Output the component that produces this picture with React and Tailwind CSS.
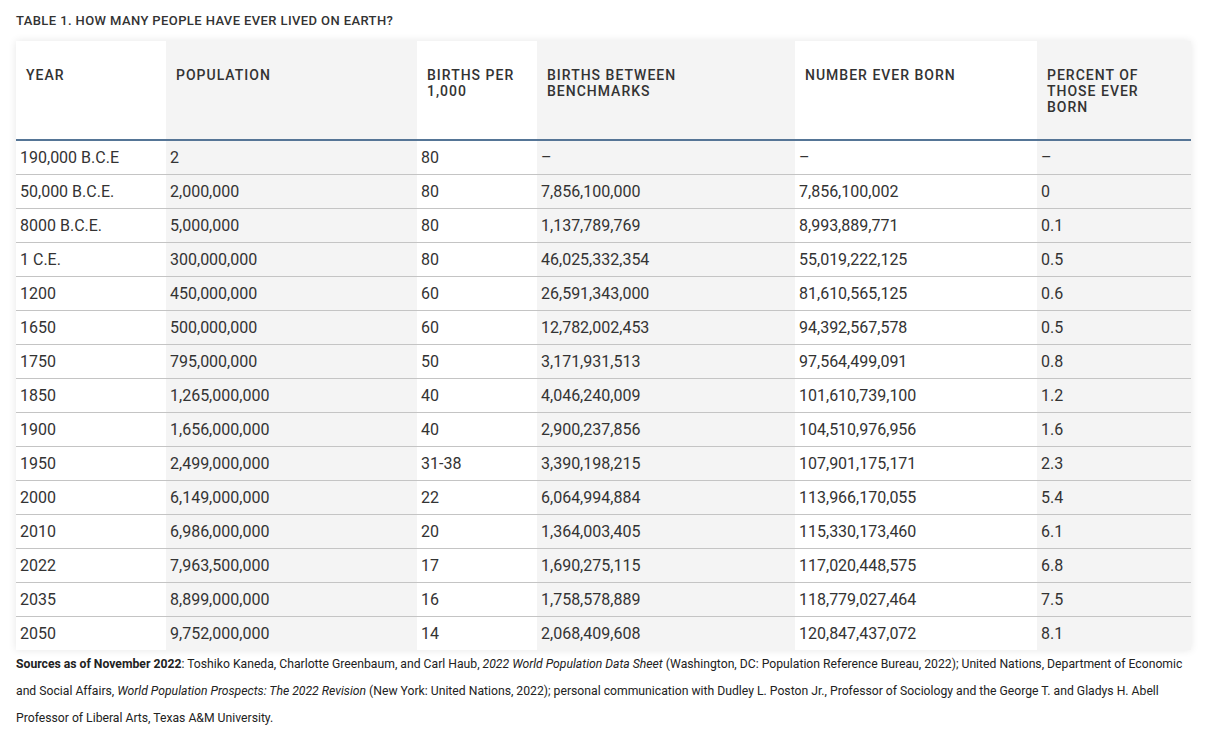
import React from "react";

const rows = [
  ["190,000 B.C.E", "2", "80", "–", "–", "–"],
  ["50,000 B.C.E.", "2,000,000", "80", "7,856,100,000", "7,856,100,002", "0"],
  ["8000 B.C.E.", "5,000,000", "80", "1,137,789,769", "8,993,889,771", "0.1"],
  ["1 C.E.", "300,000,000", "80", "46,025,332,354", "55,019,222,125", "0.5"],
  ["1200", "450,000,000", "60", "26,591,343,000", "81,610,565,125", "0.6"],
  ["1650", "500,000,000", "60", "12,782,002,453", "94,392,567,578", "0.5"],
  ["1750", "795,000,000", "50", "3,171,931,513", "97,564,499,091", "0.8"],
  ["1850", "1,265,000,000", "40", "4,046,240,009", "101,610,739,100", "1.2"],
  ["1900", "1,656,000,000", "40", "2,900,237,856", "104,510,976,956", "1.6"],
  ["1950", "2,499,000,000", "31-38", "3,390,198,215", "107,901,175,171", "2.3"],
  ["2000", "6,149,000,000", "22", "6,064,994,884", "113,966,170,055", "5.4"],
  ["2010", "6,986,000,000", "20", "1,364,003,405", "115,330,173,460", "6.1"],
  ["2022", "7,963,500,000", "17", "1,690,275,115", "117,020,448,575", "6.8"],
  ["2035", "8,899,000,000", "16", "1,758,578,889", "118,779,027,464", "7.5"],
  ["2050", "9,752,000,000", "14", "2,068,409,608", "120,847,437,072", "8.1"],
];

const widths = ["w-[150px]", "w-[251px]", "w-[120px]", "w-[258px]", "w-[242px]", "w-[154px]"];
const bgs = ["bg-white", "bg-[#f4f4f4]", "bg-white", "bg-[#f4f4f4]", "bg-white", "bg-[#f4f4f4]"];

const headers = [
  ["YEAR"],
  ["POPULATION"],
  ["BIRTHS PER", "1,000"],
  ["BIRTHS BETWEEN", "BENCHMARKS"],
  ["NUMBER EVER BORN"],
  ["PERCENT OF", "THOSE EVER", "BORN"],
];

export default function App() {
  return (
    <div className="w-[1222px] h-[746px] bg-white text-[#333] overflow-hidden" style={{ fontFamily: "Roboto, 'Liberation Sans', sans-serif" }}>
      <div className="pl-[16px] pt-[13px] text-[13px] leading-[16px] font-medium tracking-[0.4px] text-[#333]">
        TABLE 1. HOW MANY PEOPLE HAVE EVER LIVED ON EARTH?
      </div>
      <div className="ml-[16px] mt-[12px] w-[1175px] shadow-[0_0_8px_rgba(0,0,0,0.10)]">
        <table className="w-[1175px] border-collapse table-fixed">
          <thead>
            <tr className="border-b-[2px] border-[#557596]">
              {headers.map((h, i) => (
                <th
                  key={i}
                  className={`${widths[i]} ${bgs[i]} h-[99px] align-top text-left pt-[26px] pl-[10px] pr-[4px] text-[14px] leading-[16px] font-medium tracking-[1px] text-[#333]`}
                >
                  {h.map((line, j) => (
                    <div key={j} className="whitespace-nowrap">{line}</div>
                  ))}
                </th>
              ))}
            </tr>
          </thead>
          <tbody>
            {rows.map((r, ri) => (
              <tr key={ri} className={ri < rows.length - 1 ? "border-b border-[#c4c4c4]" : ""}>
                {r.map((c, ci) => (
                  <td
                    key={ci}
                    className={`${bgs[ci]} h-[34px] pl-[4px] pt-[2px] text-[16px] leading-[20px] text-[#333] whitespace-nowrap align-middle`}
                  >
                    {c}
                  </td>
                ))}
              </tr>
            ))}
          </tbody>
        </table>
      </div>
      <div className="pl-[16px] pt-[1px] text-[12.2px] leading-[27px] text-[#222]">
        <div className="whitespace-nowrap">
          <span className="font-bold">Sources as of November 2022</span>: Toshiko Kaneda, Charlotte Greenbaum, and Carl Haub, <i>2022 World Population Data Sheet</i> (Washington, DC: Population Reference Bureau, 2022); United Nations, Department of Economic
        </div>
        <div className="whitespace-nowrap">
          and Social Affairs, <i>World Population Prospects: The 2022 Revision</i> (New York: United Nations, 2022); personal communication with Dudley L. Poston Jr., Professor of Sociology and the George T. and Gladys H. Abell
        </div>
        <div className="whitespace-nowrap">Professor of Liberal Arts, Texas A&amp;M University.</div>
      </div>
    </div>
  );
}
